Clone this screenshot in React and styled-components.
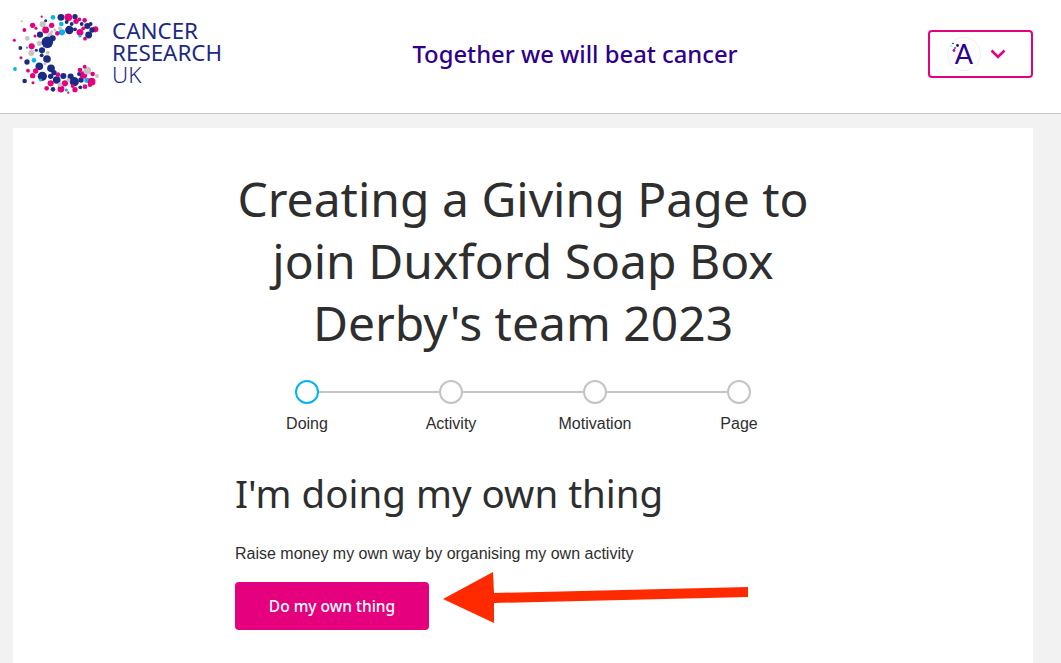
import { Fragment } from "react";
import styled, { createGlobalStyle } from "styled-components";

const GlobalStyle = createGlobalStyle`
  html, body {
    margin: 0;
    padding: 0;
    background: #f2f2f2;
    overflow: hidden;
  }
  * { box-sizing: border-box; }
`;

const Header = styled.header`
  display: flex;
  justify-content: space-between;
  align-items: center;
  height: 114px;
  padding: 0 28px 6px 10px;
  background: #fff;
  border-bottom: 1px solid #c4c4c4;
`;

const Brand = styled.div`
  display: flex;
  align-items: center;
  gap: 10px;
`;

const BrandText = styled.div`
  padding-bottom: 2px;
  font-family: "Noto Sans", sans-serif;
  font-size: 22.4px;
  line-height: 22px;
  color: #1b2a83;
`;

const BrandLine = styled.div`
  font-weight: ${(props) => (props.light ? 300 : 400)};
`;

const Tagline = styled.div`
  font-family: "Noto Sans", sans-serif;
  font-size: 23.8px;
  font-weight: 500;
  color: #2e008b;
`;

const AccountButton = styled.button`
  display: flex;
  align-items: center;
  width: 105px;
  height: 48px;
  padding: 0 0 0 17px;
  background: #fff;
  border: 2px solid #e5007e;
  border-radius: 4px;
`;

const Avatar = styled.div`
  position: relative;
  display: flex;
  align-items: center;
  justify-content: center;
  width: 34px;
  height: 34px;
  margin-right: 9px;
  border: 1px solid #eeeeee;
  border-radius: 50%;
  font-family: Lato, sans-serif;
  font-size: 27px;
  color: #2e008b;
`;

const AvatarDots = styled.svg`
  position: absolute;
  left: 2px;
  top: 4px;
`;

const Page = styled.main`
  padding: 14px 28px 0 13px;
`;

const Card = styled.section`
  display: flex;
  justify-content: center;
  padding: 40px 0 33px;
  background: #fff;
`;

const Column = styled.div`
  width: 576px;
`;

const Title = styled.h1`
  margin: 0;
  font-family: "Noto Sans", sans-serif;
  font-size: 48px;
  font-weight: 400;
  line-height: 62px;
  text-align: center;
  color: #2e2e2e;
`;

const Stepper = styled.div`
  margin-top: 26px;
`;

const Track = styled.div`
  display: flex;
  align-items: center;
  margin: 0 60px;
`;

const Dot = styled.div`
  flex: none;
  width: 24px;
  height: 24px;
  border: 2px solid ${(props) => (props.active ? "#00b6ed" : "#c4c4c4")};
  border-radius: 50%;
`;

const Connector = styled.div`
  flex: 1;
  height: 2px;
  background: #c4c4c4;
`;

const Labels = styled.div`
  display: grid;
  grid-template-columns: repeat(4, 144px);
  margin-top: 8px;
`;

const Label = styled.div`
  font-family: "Liberation Sans", Arial, sans-serif;
  font-size: 16px;
  line-height: 24px;
  text-align: center;
  color: #2e2e2e;
`;

const Heading = styled.h2`
  margin: 32px 0 0;
  font-family: "Noto Sans", sans-serif;
  font-size: 38.5px;
  font-weight: 400;
  line-height: 50px;
  color: #2e2e2e;
`;

const Intro = styled.p`
  margin: 24px 0 0;
  font-family: "Liberation Sans", Arial, sans-serif;
  font-size: 16px;
  line-height: 24px;
  color: #2e2e2e;
`;

const Action = styled.div`
  position: relative;
  margin-top: 16px;
`;

const PrimaryButton = styled.button`
  display: block;
  width: 194px;
  height: 48px;
  padding: 0;
  background: #e5007e;
  border: none;
  border-radius: 4px;
  font-family: "Noto Sans", sans-serif;
  font-size: 15.5px;
  font-weight: 500;
  color: #fff;
`;

const Arrow = styled.svg`
  position: absolute;
  left: 205px;
  top: -14px;
`;

const n = "#1b2a83";
const p = "#e5007e";
const c = "#00b6ed";
const g = "#c4c4c4";

// dots of the logo, x / y / radius / colour
const logoDots = [
  [183, 52, 9, n], [205, 52, 10, p], [225, 50, 7, n], [238, 58, 5, p], [159, 52, 6, c],
  [137, 62, 4, n], [125, 50, 3, p], [254, 61, 6, p], [272, 72, 5, n], [262, 78, 8, n],
  [286, 88, 8, p], [276, 90, 7, n], [208, 90, 11, n], [200, 66, 5, n], [228, 64, 7, p],
  [184, 72, 6, c], [155, 76, 7, p], [128, 73, 8, g], [98, 76, 7, p], [108, 85, 4, p],
  [137, 90, 9, p], [186, 97, 8, c], [172, 100, 6, p], [120, 104, 8, n], [105, 108, 4, p],
  [150, 105, 7, g], [82, 115, 6, g], [73, 90, 5, p], [65, 64, 3, g], [43, 121, 4, p],
  [118, 130, 7, g], [142, 127, 15, n], [158, 115, 8, n], [95, 139, 8, p], [61, 144, 5, n],
  [81, 143, 3, c], [126, 151, 8, n], [109, 151, 4, n], [143, 158, 5, g], [94, 159, 8, g],
  [63, 173, 4, p], [125, 166, 5, n], [141, 177, 10, n], [102, 181, 6, c], [81, 186, 7, n],
  [118, 199, 10, n], [135, 191, 4, g], [45, 207, 5, c], [84, 212, 5, p], [107, 213, 7, p],
  [98, 227, 7, p], [127, 229, 12, n], [153, 205, 10, n], [74, 243, 6, n], [99, 248, 4, p],
  [162, 218, 7, n], [152, 229, 7, n], [122, 240, 4, c], [170, 240, 10, n], [190, 228, 8, n],
  [174, 224, 6, p], [212, 230, 8, n], [195, 250, 8, p], [223, 245, 12, n], [152, 250, 8, p],
  [140, 265, 6, p], [159, 268, 6, n], [183, 267, 9, p], [180, 254, 6, g], [199, 270, 4, c],
  [205, 278, 3, p], [225, 269, 7, p], [218, 258, 5, p], [241, 262, 5, n], [255, 260, 6, p],
  [270, 254, 6, p], [243, 240, 7, n], [261, 241, 7, c], [275, 245, 10, p], [250, 225, 10, p],
  [237, 222, 5, n], [262, 212, 10, g], [278, 222, 6, p], [291, 228, 5, g], [254, 200, 5, p],
  [240, 210, 6, p], [205, 240, 5, g], [266, 105, 9, n], [240, 97, 9, p], [250, 85, 5, p],
  [240, 108, 4, c], [255, 116, 5, p], [225, 88, 5, n], [245, 72, 5, n], [215, 72, 5, n],
  [165, 90, 4, g], [180, 85, 5, g], [155, 95, 4, g],
];

const steps = ["Doing", "Activity", "Motivation", "Page"];

function Logo() {
  return (
    <svg width="92" height="87" viewBox="30 30 276 261">
      {logoDots.map(([x, y, r, fill], i) => (
        <circle key={i} cx={x} cy={y} r={r * 1.15} fill={fill} />
      ))}
    </svg>
  );
}

export default function App() {
  return (
    <>
      <GlobalStyle />
      <Header>
        <Brand>
          <Logo />
          <BrandText>
            <BrandLine>CANCER</BrandLine>
            <BrandLine>RESEARCH</BrandLine>
            <BrandLine light>UK</BrandLine>
          </BrandText>
        </Brand>
        <Tagline>Together we will beat cancer</Tagline>
        <AccountButton>
          <Avatar>
            <AvatarDots width="12" height="12" viewBox="0 0 12 12">
              <circle cx="3" cy="1.5" r="0.8" fill="#2e008b" />
              <circle cx="1.5" cy="4" r="0.8" fill="#c4c4c4" />
              <circle cx="7.5" cy="3.5" r="1.4" fill="#2e008b" />
              <circle cx="5" cy="6" r="1.2" fill="#00b6ed" />
              <circle cx="4" cy="8.5" r="1.4" fill="#e5007e" />
            </AvatarDots>
            A
          </Avatar>
          <svg width="16" height="10" viewBox="0 0 16 10">
            <path d="M1.5 1.5 L8 8 L14.5 1.5" fill="none" stroke="#e5007e" strokeWidth="2.6" />
          </svg>
        </AccountButton>
      </Header>
      <Page>
        <Card>
          <Column>
            <Title>
              Creating a Giving Page to
              <br />
              join Duxford Soap Box
              <br />
              Derby's team 2023
            </Title>
            <Stepper>
              <Track>
                {steps.map((step, i) => (
                  <Fragment key={step}>
                    {i > 0 && <Connector />}
                    <Dot active={i === 0} />
                  </Fragment>
                ))}
              </Track>
              <Labels>
                {steps.map((step) => (
                  <Label key={step}>{step}</Label>
                ))}
              </Labels>
            </Stepper>
            <Heading>I'm doing my own thing</Heading>
            <Intro>Raise money my own way by organising my own activity</Intro>
            <Action>
              <PrimaryButton>Do my own thing</PrimaryButton>
              <Arrow width="310" height="56" viewBox="0 0 310 56">
                <polygon points="3,31 53,4 54,25 308,19 308,29 54,35 54,55" fill="#ff2a00" />
              </Arrow>
            </Action>
          </Column>
        </Card>
      </Page>
    </>
  );
}
